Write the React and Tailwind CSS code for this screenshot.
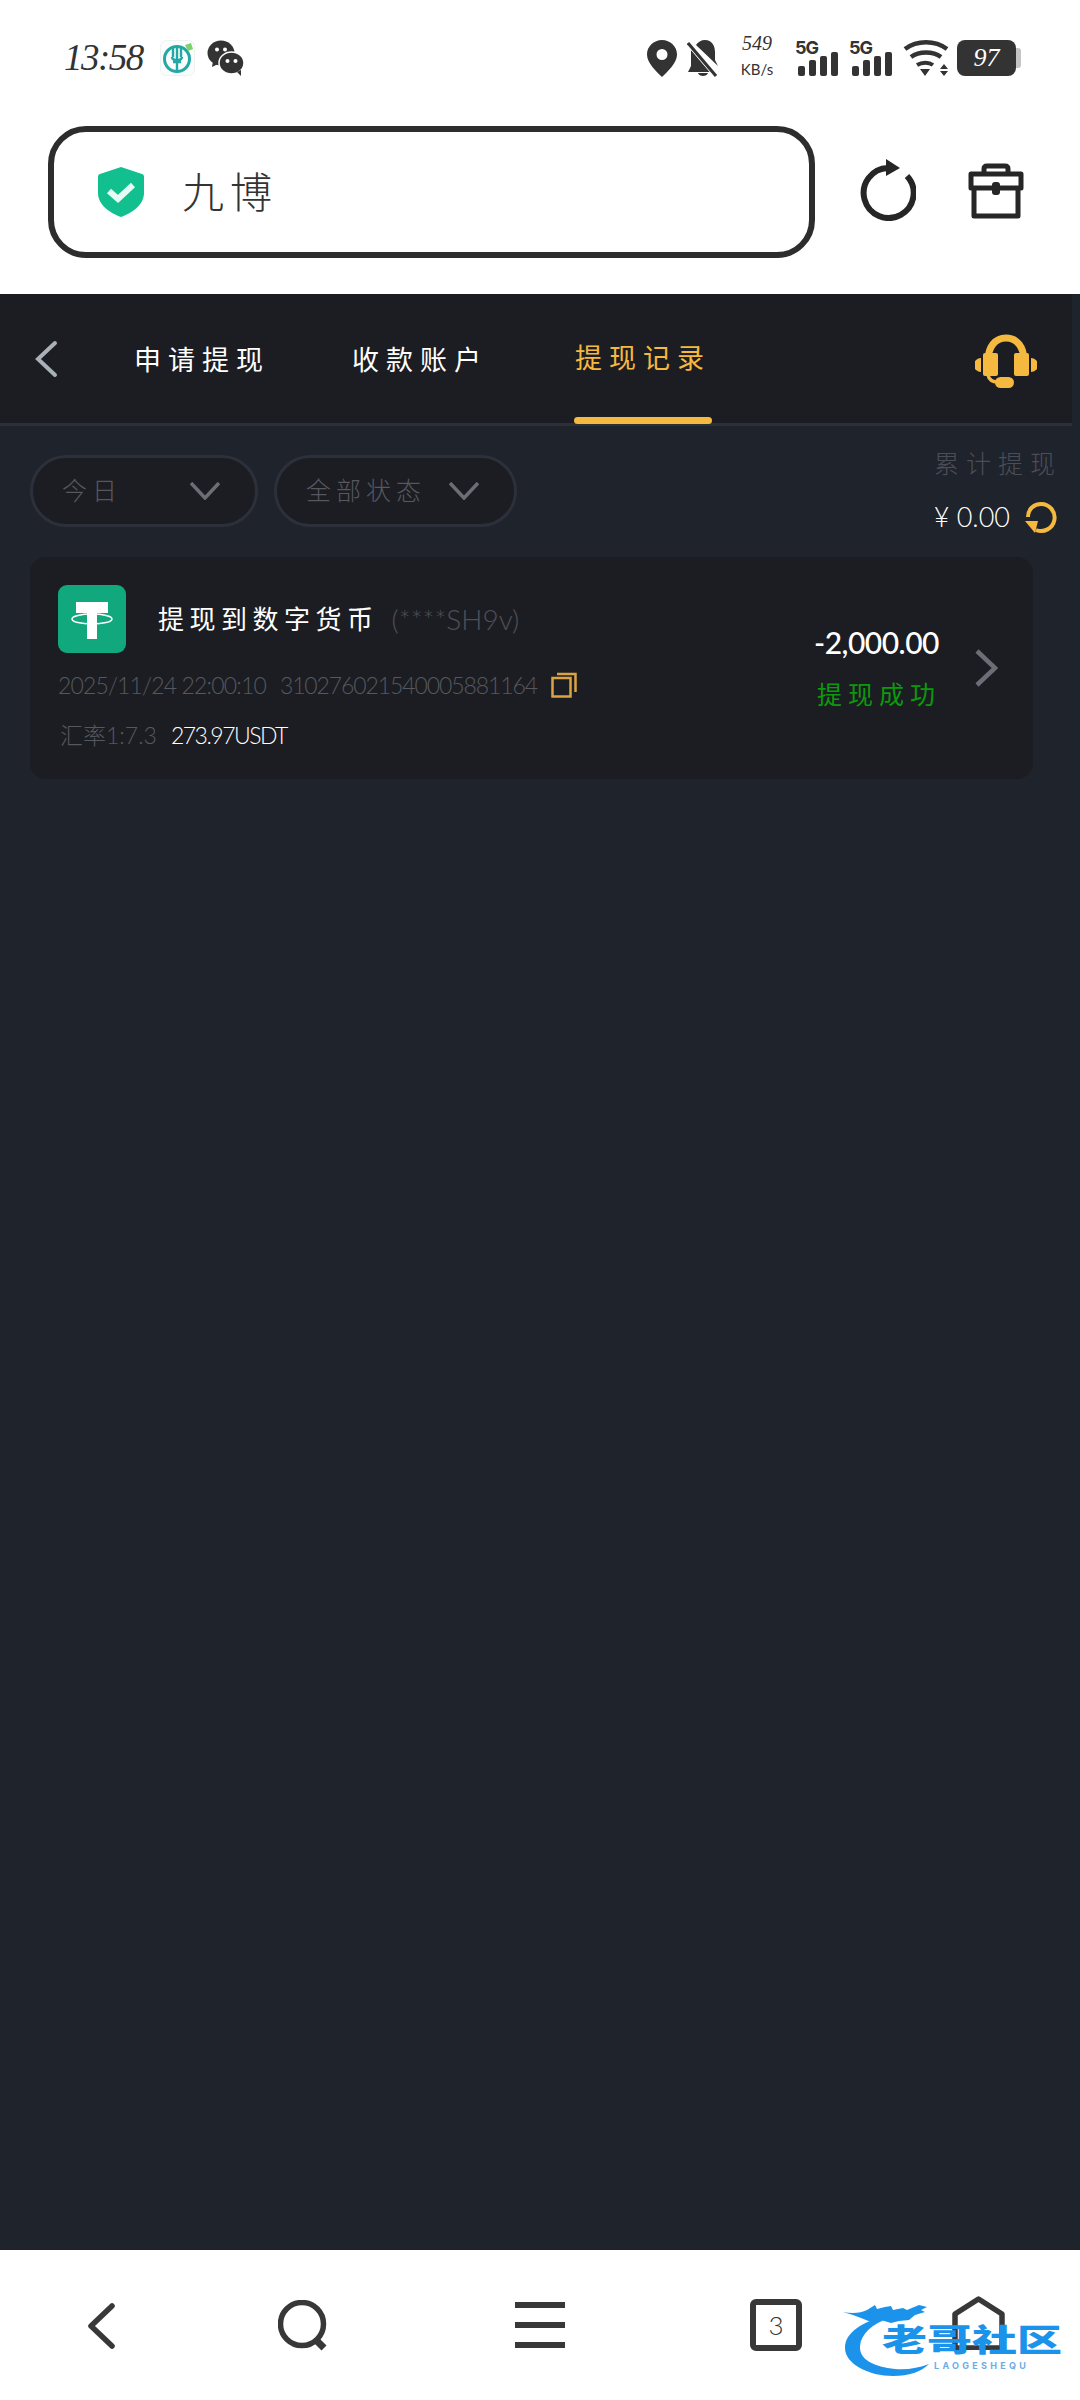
const tabs = [
  { label: "申请提现", w: "w-[130px]", ml: "ml-[79px]" },
  { label: "收款账户", w: "w-[130px]", ml: "ml-[88px]" },
];

function Signal() {
  return (
    <div className="flex flex-col w-[44px] h-[36px]">
      <span className="text-[18px] leading-[16px] font-bold font-['Inter'] text-[#333] tracking-[-1px]">5G</span>
      <div className="flex items-end gap-[4px] h-[24px] -mt-[4px] pl-[3px]">
        <div className="w-[7px] h-[10px] rounded-[2px] bg-[#333]" />
        <div className="w-[7px] h-[16px] rounded-[2px] bg-[#333]" />
        <div className="w-[7px] h-[20px] rounded-[2px] bg-[#333]" />
        <div className="w-[7px] h-[24px] rounded-[2px] bg-[#333]" />
      </div>
    </div>
  );
}

function StatusBar() {
  return (
    <div className="flex items-center h-[116px] pl-[64px] text-[#333]">
      <span className="text-[37px] italic font-['Liberation_Serif'] w-[96px] tracking-[-1.5px]">13:58</span>
      <svg width="36" height="37" viewBox="0 0 36 37" fill="none">
        <rect x="0.5" y="0.5" width="34" height="35" rx="6" fill="#fbfdfd" stroke="#eef2f2" />
        <circle cx="17" cy="19" r="12.5" stroke="#23a9a5" strokeWidth="3" />
        <path d="M13 8v9M17 7v24M21 8v9M12 17c0 4 10 4 10 0M13 22h8" stroke="#23a9a5" strokeWidth="2.4" />
        <path d="M25 5l6-2 2 6-5 2z" fill="#7bd46b" />
      </svg>
      <svg className="ml-[11px]" width="37" height="36" viewBox="0 0 37 36" fill="#333">
        <ellipse cx="14" cy="13" rx="13.5" ry="12.5" />
        <path d="M6 21l-1 6 6-3z" />
        <ellipse cx="24.5" cy="23" rx="12.5" ry="11" stroke="#fff" strokeWidth="1.5" />
        <path d="M30 32l4 4v-6z" />
        <circle cx="10" cy="9.5" r="2" fill="#fff" />
        <circle cx="18" cy="9.5" r="2" fill="#fff" />
        <circle cx="20.5" cy="21" r="2" fill="#fff" />
        <circle cx="28.5" cy="21" r="2" fill="#fff" />
      </svg>
      <svg className="ml-[403px]" width="30" height="37" viewBox="0 0 30 37" fill="#333">
        <path fillRule="evenodd" d="M15 0c8.300 0 15 6.500 15 14.500C30 23 21 31 15 37 9 31 0 23 0 14.500 0 6.500 6.700 0 15 0zm0 9a5.500 5.500 0 1 0 0 11 5.500 5.500 0 0 0 0-11z" />
      </svg>
      <svg className="ml-[10px]" width="32" height="37" viewBox="0 0 32 37" fill="#333">
        <path d="M9 5c2-3 5-5 9-5 7 0 10 6 10 12v8l3 6zM4 10l19 22H1l3-6zM11 33h10c-1 4-9 4-10 0z" />
        <path d="M2 3l28 33" stroke="#fff" strokeWidth="6" />
        <path d="M1 3l28 33" stroke="#333" strokeWidth="3" />
      </svg>
      <div className="ml-[22px] w-[32px] flex flex-col items-center -mt-[6px]">
        <span className="text-[20px] leading-[28px] italic font-['Liberation_Serif']">549</span>
        <span className="text-[15px] leading-[24px] whitespace-nowrap font-['Lato'] text-[#333]">KB/s</span>
      </div>
      <div className="ml-[22px]"><Signal /></div>
      <div className="ml-[10px]"><Signal /></div>
      <svg className="ml-[10px]" width="46" height="37" viewBox="0 0 46 37" fill="none" stroke="#333" strokeWidth="4.500">
        <path d="M2 9c12-9 30-9 42 0" />
        <path d="M8 17c8-6 22-6 30 0" />
        <path d="M14 25c5-3 12-3 16 0" strokeWidth="4" />
        <path d="M17 29h10l-5 7zM37 29l4-5 4 5zM37 31h8l-4 5z" fill="#333" stroke="none" />
      </svg>
      <div className="ml-[8px] flex items-center">
        <div className="w-[59px] h-[36px] rounded-[8px] bg-[#333] flex items-center justify-center">
          <span className="text-[26px] italic font-['Liberation_Serif'] text-white leading-none">97</span>
        </div>
        <div className="w-[5px] h-[20px] rounded-r-[3px] bg-[#c4c4c4]" />
      </div>
    </div>
  );
}

function AddressRow() {
  return (
    <div className="flex items-start h-[178px] pt-[10px] pl-[48px]">
      <div className="w-[767px] h-[132px] border-[6px] border-[#2d2d2d] rounded-[38px] flex items-center pl-[44px]">
        <svg width="46" height="50" viewBox="0 0 46 50">
          <path d="M23 0l21 7c1 0 2 1 2 3v16c0 12-12 20-23 24C12 46 0 38 0 26V10c0-2 1-3 2-3z" fill="#12c08f" />
          <path d="M11 24l9 8 15-14" stroke="#e6fbf4" strokeWidth="6" fill="none" />
        </svg>
        <span className="ml-[38px] text-[42px] leading-none text-[#333] font-light tracking-[6px]">九博</span>
      </div>
      <svg className="ml-[45px] mt-[33px]" width="56" height="62" viewBox="0 0 56 62" fill="none" stroke="#262626" strokeWidth="6">
        <path d="M47 17a25 25 0 1 1-19-8" />
        <path d="M26 0l14 9-14 8z" fill="#262626" stroke="none" />
      </svg>
      <svg className="ml-[52px] mt-[37px]" width="56" height="56" viewBox="0 0 56 56" fill="none" stroke="#262626" strokeWidth="5">
        <path d="M16 10V6c0-2 1-3 3-3h18c2 0 3 1 3 3v4" />
        <path d="M3 11h50v14H3zM6 25v28h44V25" strokeLinejoin="round" />
        <rect x="24" y="19" width="8" height="13" rx="3" fill="#262626" stroke="none" />
      </svg>
    </div>
  );
}

function Headset() {
  return (
    <svg width="62" height="55" viewBox="0 0 62 55" fill="#f5b93f">
      <path d="M13 28C13 14 20 5 31 5s18 9 18 23" fill="none" stroke="#f5b93f" strokeWidth="7" />
      <rect x="8" y="20" width="15" height="23" rx="2" />
      <rect x="39" y="20" width="15" height="23" rx="2" />
      <path d="M6 25a7 7 0 0 0 0 14zM56 25a7 7 0 0 1 0 14z" />
      <path d="M13 42c1 5 5 7 10 7h8" fill="none" stroke="#f5b93f" strokeWidth="3.500" />
      <rect x="20" y="44" width="19" height="11" rx="5.500" />
    </svg>
  );
}

function Header() {
  return (
    <div className="w-[1072px] h-[132px] shrink-0 bg-[#1c1d22] border-b-[3px] border-[#2c303b] flex items-start">
      <svg className="ml-[34px] mt-[46px]" width="24" height="38" viewBox="0 0 24 38" fill="none" stroke="#a9b0b8" strokeWidth="4" strokeLinecap="round">
        <path d="M21 3L4 19l17 16" />
      </svg>
      {tabs.map((t) => (
        <div key={t.label} className={`${t.w} ${t.ml} h-[129px] flex items-center justify-center mt-[2px]`}>
          <span className="text-[27px] text-white tracking-[7px] whitespace-nowrap">{t.label}</span>
        </div>
      ))}
      <div className="ml-[89px] w-[138px] h-[130px] flex flex-col items-center">
        <div className="h-[123px] flex items-center pt-[5px]">
          <span className="text-[27px] text-[#f5b93f] tracking-[7px] whitespace-nowrap">提现记录</span>
        </div>
        <div className="w-[138px] h-[7px] rounded-full bg-[#f5b93f]" />
      </div>
      <div className="ml-[263px] mt-[39px]">
        <Headset />
      </div>
    </div>
  );
}

function Pill({ label, w, gap }) {
  return (
    <div className={`${w} h-[72px] rounded-full border-[3px] border-[#2c303b] bg-[#1c1d22] flex items-center pl-[29px]`}>
      <span className="text-[25px] font-light text-[#55585f] tracking-[5px] whitespace-nowrap">{label}</span>
      <svg className={gap} width="30" height="18" viewBox="0 0 30 18" fill="none" stroke="#6b6e76" strokeWidth="3.500">
        <path d="M1 1l14 15L29 1" />
      </svg>
    </div>
  );
}

function Filters() {
  return (
    <div className="flex items-start pl-[30px] pr-[23px] h-[129px]">
      <div className="flex gap-[16px] mt-[29px]">
        <Pill label="今日" w="w-[228px]" gap="ml-[68px]" />
        <Pill label="全部状态" w="w-[243px]" gap="ml-[23px]" />
      </div>
      <div className="ml-auto flex flex-col items-end">
        <span className="mt-[20px] text-[25px] leading-[34px] font-light text-[#4b4e57] tracking-[7px] -mr-[5px] whitespace-nowrap">累计提现</span>
        <div className="flex items-center mt-[20px]">
          <span className="text-[27px] leading-[34px] font-light text-white font-['Lato'] whitespace-nowrap">¥ 0.00</span>
          <svg className="ml-[14px]" width="33" height="33" viewBox="0 0 33 33" fill="none" stroke="#f5b93f" strokeWidth="4">
            <path d="M4 16C4 8 10 3 17 3a13.500 13.500 0 1 1-5 26" />
            <path d="M1 20h13l-3 12z" fill="#f5b93f" stroke="none" />
          </svg>
        </div>
      </div>
    </div>
  );
}

function RecordCard() {
  return (
    <div className="mx-[30px] w-[1003px] h-[222px] mt-[2px] rounded-[16px] bg-[#1c1d22] flex">
      <div className="flex-1 pl-[28px] pt-[28px]">
        <div className="flex items-center h-[68px]">
          <svg width="68" height="68" viewBox="0 0 68 68">
            <rect width="68" height="68" rx="9" fill="#12a87e" />
            <path d="M18 17h32v11H39v26H29V28H18z" fill="#fff" />
            <ellipse cx="34" cy="34" rx="20" ry="5" fill="none" stroke="#fff" strokeWidth="1.500" />
          </svg>
          <span className="ml-[32px] text-[26px] text-white tracking-[5.500px] whitespace-nowrap">提现到数字货币</span>
          <span className="ml-[13px] text-[28px] font-light text-[#4d5058] font-['Lato'] whitespace-nowrap">(****SH9v)</span>
        </div>
        <div className="flex items-center h-[30px] mt-[17px]">
          <span className="text-[23px] font-light text-[#55585f] font-['Lato'] whitespace-nowrap tracking-[-0.85px]">2025/11/24 22:00:10</span>
          <span className="ml-[14px] text-[23px] font-light text-[#55585f] font-['Lato'] whitespace-nowrap tracking-[-1.1px]">310276021540005881164</span>
          <svg className="ml-[14px]" width="26" height="26" viewBox="0 0 26 26" fill="none" stroke="#d9a441" strokeWidth="2.500">
            <rect x="1.500" y="6" width="18" height="18.500" />
            <path d="M6 2h18.500v18" />
          </svg>
        </div>
        <div className="flex items-center h-[30px] mt-[20px] pl-[2px]">
          <span className="text-[23px] font-light text-[#55585f] whitespace-nowrap">汇率1:7.3</span>
          <span className="ml-[14px] text-[23px] font-light text-white font-['Lato'] whitespace-nowrap tracking-[-1.5px]">273.97USDT</span>
        </div>
      </div>
      <div className="flex items-start pr-[35px]">
        <div className="flex flex-col items-end pt-[66px]">
          <span className="text-[30px] leading-[38px] text-white font-['Lato'] font-medium whitespace-nowrap tracking-[-0.5px]">-2,000.00</span>
          <span className="mt-[14px] text-[25px] leading-[38px] text-[#0a9a0a] tracking-[6px] -mr-[2px] whitespace-nowrap">提现成功</span>
        </div>
        <svg className="ml-[36px] mt-[92px]" width="23" height="38" viewBox="0 0 23 38" fill="none" stroke="#6b6e76" strokeWidth="4.500">
          <path d="M2 2l18 17L2 36" />
        </svg>
      </div>
    </div>
  );
}

function BottomNav() {
  return (
    <div className="relative h-[150px] shrink-0 bg-white flex items-start pl-[88px] pt-[46px] text-[#383838]">
      <svg className="mt-[7px]" width="27" height="46" viewBox="0 0 27 46" fill="none" stroke="#383838" strokeWidth="5.500" strokeLinecap="round" strokeLinejoin="round">
        <path d="M24 3L3 23l21 20" />
      </svg>
      <svg className="ml-[163px] mt-[4px]" width="50" height="52" viewBox="0 0 50 52" fill="none" stroke="#383838" strokeWidth="5.500">
        <circle cx="24" cy="24" r="21.500" />
        <path d="M37 39l9 9" strokeWidth="7" />
      </svg>
      <div className="ml-[187px] mt-[6px] w-[50px] flex flex-col gap-[14px]">
        <div className="h-[6px] bg-[#383838]" />
        <div className="h-[6px] bg-[#383838]" />
        <div className="h-[6px] bg-[#383838]" />
      </div>
      <div className="ml-[185px] mt-[3px] w-[52px] h-[52px] border-[6px] border-[#383838] rounded-[6px] flex items-center justify-center">
        <span className="text-[26px] leading-none text-[#333] font-light">3</span>
      </div>
      <svg className="ml-[150px]" width="53" height="54" viewBox="0 0 53 54" fill="none" stroke="#383838" strokeWidth="5.500" strokeLinejoin="round">
        <path d="M3 52V18L26.500 3 50 18v34z" />
      </svg>
      <div className="absolute left-[843px] top-[50px] w-[222px] h-[80px]">
        <svg className="absolute left-0 top-0" width="222" height="80" viewBox="0 0 222 80" fill="#1c93ea">
          <path d="M42 16C20 22 2 32 2 48c0 16 24 28 48 28 16 0 28-4 36-12-10 4-22 6-34 5C32 67 16 60 17 46c1-12 12-22 29-28z" />
          <path d="M0 12c10 2 18 1 24-2l8-5 2 4 8-2 6-1 2 4 10-2 4 2 12-5 8 2-6 3 4 2-10 3-6 5-10 1-8 2-10-3-10 2-10-4-8-3z" />
        </svg>
        <div className="absolute left-[39px] top-[28px] text-[45px] leading-[30px] font-black text-[#1c93ea] whitespace-nowrap scale-y-[0.68] origin-top-left font-['Noto_Sans_CJK_SC']">老哥社区</div>
        <div className="absolute left-[91px] top-[61px] text-[9px] leading-[10px] font-bold text-[#6aaee6] tracking-[3.300px] whitespace-nowrap font-['Inter']">LAOGESHEQU</div>
      </div>
    </div>
  );
}

export default function App() {
  return (
    <div className="relative w-[1080px] h-[2400px] flex flex-col bg-white font-['Lato','Noto_Sans_CJK_SC',sans-serif] overflow-hidden">
      <StatusBar />
      <AddressRow />
      <div className="flex-1 bg-[#1f232c] flex flex-col">
        <Header />
        <Filters />
        <RecordCard />
      </div>
      <BottomNav />
    </div>
  );
}
